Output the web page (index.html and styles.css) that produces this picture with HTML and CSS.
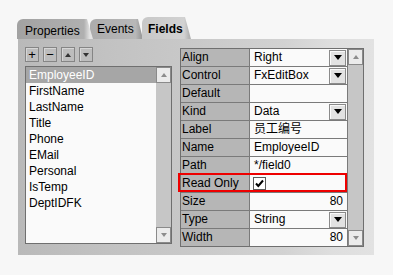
FILE: index.html
```html
<!DOCTYPE html>
<html>
<head>
<meta charset="utf-8">
<link rel="stylesheet" href="styles.css">
</head>
<body>
<div class="window">
  <div class="tabs">
    <div class="tab tab-props">Properties</div>
    <div class="tab tab-events">Events</div>
    <div class="tab tab-fields">Fields</div>
  </div>
  <div class="panel">
    <div class="left">
      <div class="toolbar">
        <div class="tbtn">+</div>
        <div class="tbtn">&minus;</div>
        <div class="tbtn"><span class="tri-up dark"></span></div>
        <div class="tbtn"><span class="tri-down dark"></span></div>
      </div>
      <div class="list">
        <div class="items">
          <div class="item sel">EmployeeID</div>
          <div class="item">FirstName</div>
          <div class="item">LastName</div>
          <div class="item">Title</div>
          <div class="item">Phone</div>
          <div class="item">EMail</div>
          <div class="item">Personal</div>
          <div class="item">IsTemp</div>
          <div class="item">DeptIDFK</div>
        </div>
        <div class="vscroll">
          <div class="sbtn"><span class="tri-up"></span></div>
          <div class="track"></div>
          <div class="sbtn"><span class="tri-down"></span></div>
        </div>
      </div>
    </div>
    <div class="grid">
      <div class="rows">
        <div class="row"><div class="key">Align</div><div class="val">Right<span class="dd"><span class="tri-down black"></span></span></div></div>
        <div class="row"><div class="key">Control</div><div class="val">FxEditBox<span class="dd"><span class="tri-down black"></span></span></div></div>
        <div class="row"><div class="key">Default</div><div class="val"></div></div>
        <div class="row"><div class="key">Kind</div><div class="val">Data<span class="dd"><span class="tri-down black"></span></span></div></div>
        <div class="row"><div class="key">Label</div><div class="val cjk">员工编号</div></div>
        <div class="row"><div class="key">Name</div><div class="val">EmployeeID</div></div>
        <div class="row"><div class="key">Path</div><div class="val">*/field0</div></div>
        <div class="row"><div class="key">Read Only</div><div class="val"><span class="check"><svg width="11" height="11" viewBox="0 0 11 11"><path d="M2 5.5 L4.3 8 L9 2.5" fill="none" stroke="#000" stroke-width="2"/></svg></span></div></div>
        <div class="row"><div class="key">Size</div><div class="val num">80</div></div>
        <div class="row"><div class="key">Type</div><div class="val">String<span class="dd"><span class="tri-down black"></span></span></div></div>
        <div class="row last"><div class="key">Width</div><div class="val num">80</div></div>
      </div>
      <div class="vscroll">
        <div class="sbtn"><span class="tri-up"></span></div>
        <div class="track"></div>
        <div class="sbtn"><span class="tri-down"></span></div>
      </div>
      <div class="highlight"></div>
    </div>
  </div>
</div>
</body>
</html>
```
FILE: styles.css
```css
* { box-sizing: border-box; }
body {
  margin: 0;
  background: #f7f7f7;
  font-family: "Liberation Sans", Arial, sans-serif;
  font-size: 12px;
  color: #000;
}
.window {
  padding: 17px 0 0 18px;
}
.tabs {
  display: flex;
  align-items: flex-end;
  height: 22px;
  margin-left: -1px;
}
.tab {
  position: relative;
  height: 20px;
  line-height: 14px;
  border-top-left-radius: 6px;
  white-space: nowrap;
}
.tab-props {
  width: 76px;
  padding: 5px 0 0 8px;
  background: linear-gradient(to right, #a2a2a2, #b0b0b0 88%, #e4e4e4 96%);
  clip-path: polygon(0 0, 70px 0, 76px 100%, 0 100%);
  z-index: 2;
}
.tab-events {
  width: 53px;
  margin-left: -3px;
  padding: 3px 0 0 7px;
  background: linear-gradient(to right, #acacac, #b8b8b8 86%, #9c9c9c 96%);
  clip-path: polygon(0 0, 48px 0, 53px 100%, 0 100%);
  z-index: 1;
}
.tab-fields {
  width: 49px;
  height: 22px;
  margin-left: -1px;
  padding: 5px 0 0 6px;
  font-weight: bold;
  background: linear-gradient(to right, #c8c8c8, #d2d2d2 86%, #b4b4b4 96%);
  clip-path: polygon(0 0, 43px 0, 49px 100%, 0 100%);
  z-index: 3;
}
.panel {
  width: 356px;
  height: 216px;
  display: flex;
  gap: 8px;
  padding: 8px 10px 9px 7px;
  background: linear-gradient(to right, #b9b9b9 0%, #c2c2c2 25%, #c9c9c9 50%, #d2d2d2 75%, #dedede 88%, #e2e2e2 100%);
}
.left {
  width: 147px;
  display: flex;
  flex-direction: column;
  gap: 4px;
}
.toolbar {
  display: flex;
  gap: 4px;
  height: 15px;
}
.tbtn {
  width: 14px;
  height: 15px;
  background: #bdbdbd;
  border: 1px solid #858585;
  box-shadow: inset 1px 1px #d6d6d6;
  display: flex;
  align-items: center;
  justify-content: center;
  font-size: 13px;
  line-height: 13px;
}
.tri-up, .tri-down {
  width: 0;
  height: 0;
  border-left: 3.5px solid transparent;
  border-right: 3.5px solid transparent;
}
.tri-up { border-bottom: 4px solid #8c8c8c; }
.tri-down { border-top: 4px solid #8c8c8c; }
.tri-up.dark { border-bottom-color: #333; }
.tri-down.dark { border-top-color: #333; }
.tri-down.black { border-top-color: #000; border-left-width: 4px; border-right-width: 4px; border-top-width: 5px; }
.list {
  height: 178px;
  display: flex;
  border: 1px solid #6f6f6f;
  background: #fafafa;
}
.items {
  width: 130px;
}
.item {
  height: 16px;
  line-height: 16px;
  padding-left: 3px;
}
.item.sel {
  background: #a6a6a6;
  color: #fff;
}
.vscroll {
  width: 15px;
  display: flex;
  flex-direction: column;
  background: #c6c6c6;
}
.sbtn {
  height: 16px;
  background: #ebebeb;
  border: 1px solid #8a8a8a;
  display: flex;
  align-items: center;
  justify-content: center;
}
.track { flex: 1; }
.grid {
  position: relative;
  width: 184px;
  height: 199px;
  margin-top: 1px;
  display: flex;
  border: 1px solid #6f6f6f;
}
.rows {
  width: 167px;
}
.row {
  display: flex;
  height: 18px;
  border-bottom: 1px solid #7a7a7a;
}
.row.last {
  border-bottom: none;
  height: 17px;
}
.key {
  width: 69px;
  padding-left: 1px;
  background: #b6b6b6;
  border-right: 1px solid #7a7a7a;
  line-height: 17px;
}
.val {
  width: 98px;
  padding-left: 4px;
  background: #fafafa;
  border-right: 1px solid #7a7a7a;
  line-height: 17px;
  display: flex;
  align-items: center;
}
.val.num {
  justify-content: flex-end;
  padding-right: 4px;
}
.val.cjk {
  font-family: "Liberation Sans", "Noto Sans CJK SC", sans-serif;
}
.dd {
  margin-left: auto;
  margin-right: 1px;
  width: 17px;
  height: 16px;
  background: #e2e2e2;
  border: 1px solid #8a8a8a;
  box-shadow: inset 1px 1px #fafafa;
  display: flex;
  align-items: center;
  justify-content: center;
}
.check {
  width: 13px;
  height: 13px;
  margin-left: -1px;
  border: 1px solid #5a5a5a;
  background: #fff;
  display: flex;
  align-items: center;
  justify-content: center;
}
.highlight {
  position: absolute;
  left: -3px;
  top: 124px;
  width: 169px;
  height: 19px;
  border: 2px solid #ee0000;
}
```
